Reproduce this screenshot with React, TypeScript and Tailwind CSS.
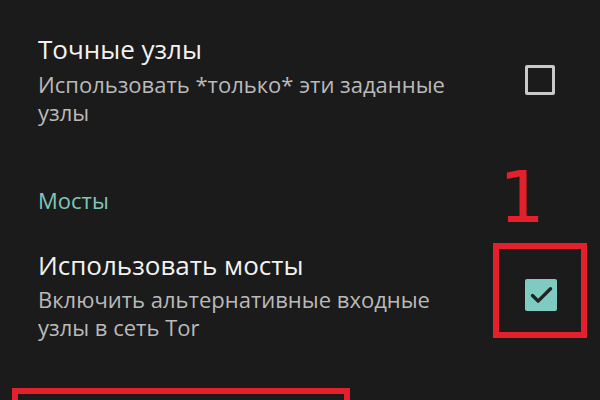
import { Check } from 'lucide-react';

export default function App() {
  return (
    <div
      className="relative w-[600px] h-[400px] overflow-hidden bg-[#1b1b1b]"
      style={{ fontFamily: '"Open Sans", "Noto Sans", sans-serif' }}
    >
      <div className="pl-[38px] pt-[33px]">
        {/* Точные узлы */}
        <div className="flex items-center">
          <div className="flex-1">
            <div className="text-[26px] leading-[32px] text-[#f2f2f2]">Точные узлы</div>
            <div className="mt-[5px] w-[430px] text-[22px] leading-[28px] text-[#bababa]">
              Использовать *только* эти заданные узлы
            </div>
          </div>
          <div className="mr-[45px] w-[30px] h-[30px] border-[3px] border-[#c9c9c9] rounded-[2px]" />
        </div>

        {/* Мосты */}
        <div className="mt-[60px] text-[22px] leading-[28px] text-[#80c6b9]">Мосты</div>

        <div className="mt-[35px] flex items-center">
          <div className="flex-1">
            <div className="text-[26px] leading-[32px] text-[#f2f2f2]">Использовать мосты</div>
            <div className="mt-[4px] w-[430px] text-[22px] leading-[28px] text-[#bababa]">
              Включить альтернативные входные узлы в сеть Tor
            </div>
          </div>
          <div className="mr-[43px] w-[32px] h-[32px] rounded-[2px] bg-[#80cbc1] flex items-center justify-center">
            <Check size={27} strokeWidth={3} color="#1d2523" />
          </div>
        </div>
      </div>

      {/* annotations */}
      <div
        className="absolute left-[499px] top-[161px] text-[72px] leading-none text-[#e3202b]"
        style={{ fontFamily: '"DejaVu Sans", sans-serif' }}
      >
        1
      </div>
      <div className="absolute left-[493px] top-[243px] w-[94px] h-[95px] border-[6px] border-[#e3202b]" />
      <div className="absolute left-[12px] top-[388px] w-[338px] h-[40px] border-[6px] border-[#e3202b]" />
    </div>
  );
}
